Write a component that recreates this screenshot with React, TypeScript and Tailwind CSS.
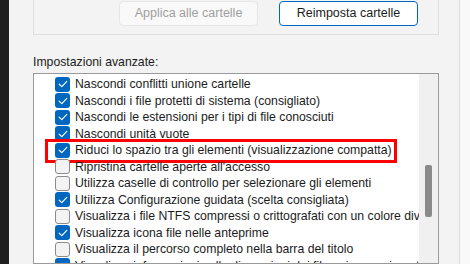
const items: { label: string; checked: boolean; hl?: boolean }[] = [
  { label: "Nascondi conflitti unione cartelle", checked: true },
  { label: "Nascondi i file protetti di sistema (consigliato)", checked: true },
  { label: "Nascondi le estensioni per i tipi di file conosciuti", checked: true },
  { label: "Nascondi unità vuote", checked: true },
  { label: "Riduci lo spazio tra gli elementi (visualizzazione compatta)", checked: true, hl: true },
  { label: "Ripristina cartelle aperte all'accesso", checked: false },
  { label: "Utilizza caselle di controllo per selezionare gli elementi", checked: false },
  { label: "Utilizza Configurazione guidata (scelta consigliata)", checked: true },
  { label: "Visualizza i file NTFS compressi o crittografati con un colore diverso", checked: false },
  { label: "Visualizza icona file nelle anteprime", checked: true },
  { label: "Visualizza il percorso completo nella barra del titolo", checked: false },
  { label: "Visualizza informazioni sulle dimensioni dei file nei suggerimenti", checked: true },
];

function Box({ checked }: { checked: boolean }) {
  if (!checked) {
    return <span className="w-[15px] h-[15px] shrink-0 rounded-[3px] border border-[#8b8b8b] bg-[#f3f3f3]" />;
  }
  return (
    <span className="w-[15px] h-[15px] shrink-0 rounded-[3px] bg-[#0067c0] flex items-center justify-center">
      <svg width="10" height="8" viewBox="0 0 10 8" fill="none">
        <path d="M1.2 4.2 L3.8 6.6 L8.8 1.4" stroke="white" strokeWidth="1.2" strokeLinecap="round" strokeLinejoin="round" />
      </svg>
    </span>
  );
}

export default function App() {
  return (
    <div
      className="w-[470px] h-[264px] overflow-hidden flex bg-[#f9f9f9] text-[12.25px] text-[#1b1b1b]"
      style={{ fontFamily: '"Liberation Sans", Arial, sans-serif' }}
    >
      <div className="w-[9px] shrink-0 bg-[#1f1f1f]" />
      <div className="w-[451px] shrink-0 bg-[#f3f3f3] border-r border-[#dcdcdc] pl-[24px] pr-[20px] flex flex-col">
        <div className="h-[36px] -mt-px border-x border-b border-[#dedede] flex justify-end gap-[21px] pr-[20px] pt-[2px]">
          <button className="w-[139px] h-[25px] rounded-[4px] border border-[#e6e6e6] bg-[#f9f9f9] text-[#a0a0a0] text-[12.5px]">
            Applica alle cartelle
          </button>
          <button className="w-[139px] h-[25px] rounded-[4px] border-[1.5px] border-[#0067c0] bg-white text-[#1b1b1b] text-[12.5px]">
            Reimposta cartelle
          </button>
        </div>
        <div className="mt-[19px] h-[16px] leading-[16px]">Impostazioni avanzate:</div>
        <div className="mt-[3px] flex-1 border border-[#9a9a9a] bg-white flex overflow-hidden">
          <div className="flex-1 pt-[2px] pl-[21px] overflow-hidden">
            {items.map((it) => (
              <div key={it.label} className="relative h-[16.5px] flex items-center gap-[5px] whitespace-nowrap">
                <Box checked={it.checked} />
                <span className="leading-[16px]">{it.label}</span>
                {it.hl && (
                  <span className="absolute -left-[10px] top-[-3px] w-[352px] h-[24px] border-[3px] border-[#ff0000]" />
                )}
              </div>
            ))}
          </div>
          <div className="w-[19px] shrink-0 bg-[#f0f0f0] pt-[91px] flex justify-center">
            <div className="w-[7px] h-[52px] rounded-[2px] bg-[#8a8a8a]" />
          </div>
        </div>
      </div>
    </div>
  );
}
